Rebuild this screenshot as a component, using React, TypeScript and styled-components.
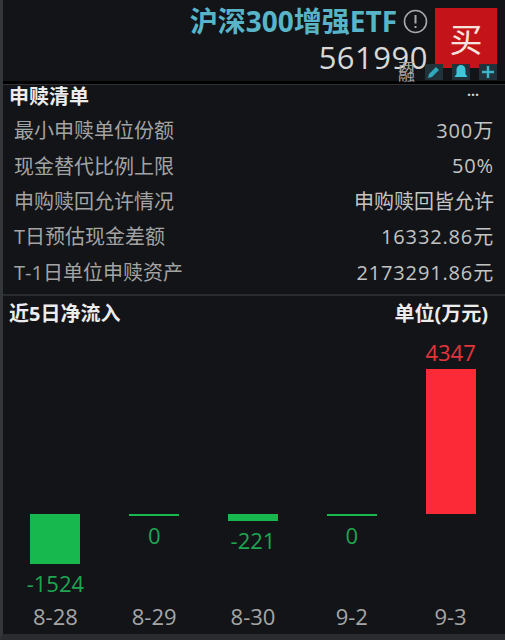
import React from 'react';
import styled, { createGlobalStyle } from 'styled-components';

const GlobalStyle = createGlobalStyle`
    html, body {
        margin: 0;
        padding: 0;
        background: #121418;
    }
    body {
        font-family: "Open Sans", "Noto Sans CJK SC", sans-serif;
    }
`;

const Page = styled.div`
    width: 505px;
    height: 640px;
    box-sizing: border-box;
    overflow: hidden;
    background: #121418;
    border-left: 3px solid #34373a;
    border-bottom: 6px solid #2a2c2f;
    display: flex;
    flex-direction: column;
`;

const Header = styled.header`
    height: 84px;
    flex: none;
    box-sizing: border-box;
    border-bottom: 3px solid #000;
    padding: 6px 8px 0 0;
    display: flex;
    justify-content: flex-end;
    align-items: flex-start;
    position: relative;
    box-shadow: 0 1px 0 #303236;
`;

const Titles = styled.div`
    display: flex;
    flex-direction: column;
    align-items: flex-end;
    margin-right: 7px;
`;

const TitleRow = styled.div`
    display: flex;
    align-items: center;
    gap: 6px;
    height: 30px;
`;

const Title = styled.h1`
    margin: 0;
    font-size: 28px;
    font-weight: 700;
    color: #58b4c8;
    line-height: 30px;
    white-space: nowrap;
`;

const Code = styled.div`
    font-size: 31px;
    line-height: 40px;
    margin-top: 1px;
    letter-spacing: 0.5px;
    color: #d8d8d8;
`;

const BuyButton = styled.button`
    width: 62px;
    height: 60px;
    margin-top: 2px;
    border: 0;
    padding: 0;
    background: #c4141a;
    color: #f6e4dc;
    font-family: "Noto Sans CJK SC", sans-serif;
    font-size: 33px;
    line-height: 60px;
`;

const Tools = styled.div`
    position: absolute;
    right: 8px;
    bottom: 1px;
    display: flex;
    align-items: flex-end;
    gap: 9px;
`;

const MarginTag = styled.span`
    width: 1em;
    margin: 0 1px -5px 0;
    font-size: 17px;
    line-height: 13px;
    color: #a8a8a8;
    transform: scaleY(0.72);
`;

const ToolIcon = styled.span`
    width: 18px;
    height: 16px;
    background: #21323a;
    display: flex;
    align-items: center;
    justify-content: center;
`;

const Section = styled.section`
    padding: 0 11px 0 6px;
    height: 212px;
    flex: none;
    box-sizing: border-box;
    border-bottom: 2px solid #2a2d30;
`;

const SectionHead = styled.div`
    display: flex;
    justify-content: space-between;
    align-items: center;
    height: 22px;
    font-size: 20px;
    font-weight: 700;
    color: #ececec;
`;

const More = styled.span`
    font-size: 14px;
    line-height: 14px;
    margin-right: 15px;
    font-weight: 700;
    color: #d0d0d0;
`;

const Rows = styled.div`
    padding: 6px 0 0 5px;
`;

const Row = styled.div`
    height: 35.4px;
    display: flex;
    justify-content: space-between;
    align-items: center;
    font-size: 20px;
    color: #a3a3a3;
`;

const Value = styled.span<{ $numeric: boolean }>`
    color: #c4c4c4;
    letter-spacing: ${({ $numeric }) => ($numeric ? '0.85px' : '0')};
`;

const FlowHead = styled(SectionHead)`
    padding: 0 17px 0 6px;
    height: 32px;
`;

const Chart = styled.div`
    display: grid;
    grid-template-columns: repeat(5, 98.8px);
    padding-left: 3px;
`;

const Column = styled.div`
    display: flex;
    flex-direction: column;
    align-items: center;
`;

const UpperArea = styled.div`
    height: 186px;
    display: flex;
    flex-direction: column;
    justify-content: flex-end;
    align-items: center;
`;

const LowerArea = styled.div`
    height: 88px;
    display: flex;
    flex-direction: column;
    align-items: center;
`;

const Bar = styled.div<{ $color: string; $height: number }>`
    width: 50px;
    flex: none;
    height: ${({ $height }) => $height}px;
    background: ${({ $color }) => $color};
`;

const Amount = styled.span<{ $color: string; $gap: string }>`
    font-size: 22px;
    line-height: 30px;
    margin: ${({ $gap }) => $gap};
    color: ${({ $color }) => $color};
`;

const DateLabel = styled.span`
    font-size: 22px;
    line-height: 28px;
    color: #a6a6a6;
`;

const GREEN = '#17b94f';
const RED = '#fb2a36';

const rows = [
    ['最小申赎单位份额', '300万'],
    ['现金替代比例上限', '50%'],
    ['申购赎回允许情况', '申购赎回皆允许'],
    ['T日预估现金差额', '16332.86元'],
    ['T-1日单位申赎资产', '2173291.86元'],
];

const flows = [
    { date: '8-28', value: -1524, height: 50 },
    { date: '8-29', value: 0, height: 2 },
    { date: '8-30', value: -221, height: 7 },
    { date: '9-2', value: 0, height: 2 },
    { date: '9-3', value: 4347, height: 145 },
];

const App = () => (
    <Page>
        <GlobalStyle />
        <Header>
            <Titles>
                <TitleRow>
                    <Title>沪深300增强ETF</Title>
                    <svg width="25" height="25" viewBox="0 0 25 25" fill="none" stroke="#a8a8a8">
                        <circle cx="12.5" cy="12.5" r="11" strokeWidth="1.6" />
                        <path d="M12.5 6v8.500M12.500 17v2" strokeWidth="2" />
                    </svg>
                </TitleRow>
                <Code>561990</Code>
            </Titles>
            <BuyButton>买</BuyButton>
            <Tools>
                <MarginTag>两融</MarginTag>
                <ToolIcon>
                    <svg width="14" height="14" viewBox="0 0 14 14" fill="#2fa9bb">
                        <path d="M1 13l1-4 7-7 3 3-7 7z" />
                    </svg>
                </ToolIcon>
                <ToolIcon>
                    <svg width="16" height="16" viewBox="0 0 16 16" fill="#3fc4d8">
                        <path d="M8 1c3 0 4.500 2.500 4.500 5v4l2 3h-13l2-3V6C3.500 3.500 5 1 8 1z" />
                    </svg>
                </ToolIcon>
                <ToolIcon>
                    <svg width="14" height="14" viewBox="0 0 14 14" stroke="#3fb4c6" strokeWidth="2.500">
                        <path d="M7 1v12M1 7h12" />
                    </svg>
                </ToolIcon>
            </Tools>
        </Header>
        <Section>
            <SectionHead>
                申赎清单
                <More>···</More>
            </SectionHead>
            <Rows>
                {rows.map(([label, value]) => (
                    <Row key={label}>
                        <span>{label}</span>
                        <Value $numeric={/\d/.test(value)}>{value}</Value>
                    </Row>
                ))}
            </Rows>
        </Section>
        <FlowHead>
            近5日净流入
            <span>单位(万元)</span>
        </FlowHead>
        <Chart>
            {flows.map(({ date, value, height }) => (
                <Column key={date}>
                    <UpperArea>
                        {value > 0 && (
                            <>
                                <Amount $color="#e5343c" $gap="0 0 2px">
                                    {value}
                                </Amount>
                                <Bar $color={RED} $height={height} />
                            </>
                        )}
                    </UpperArea>
                    <LowerArea>
                        {value <= 0 && (
                            <>
                                <Bar $color={GREEN} $height={height} />
                                <Amount $color="#1fa552" $gap="4px 0 0">
                                    {value}
                                </Amount>
                            </>
                        )}
                    </LowerArea>
                    <DateLabel>{date}</DateLabel>
                </Column>
            ))}
        </Chart>
    </Page>
);

export default App;
